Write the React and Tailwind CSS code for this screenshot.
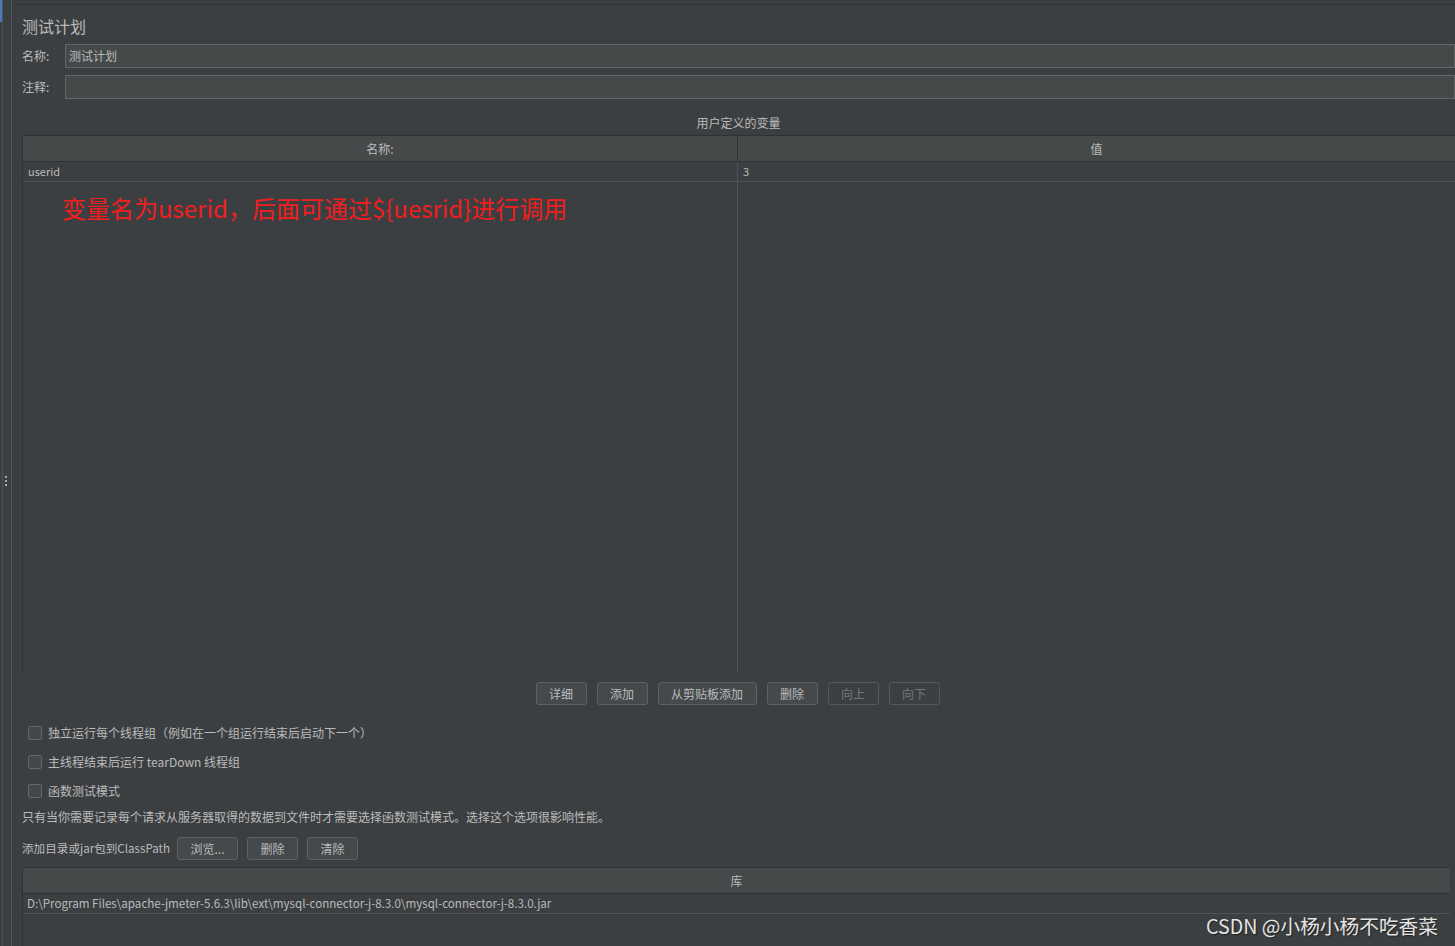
const FONT = "font-['Noto_Sans_CJK_SC','Noto_Sans',sans-serif]";

const Btn = ({ label, width, disabled }) => (
  <button
    className={`h-[23px] rounded-[3px] border text-[12px] leading-none ${
      disabled
        ? "border-[#55595b] bg-[#3c3f41] text-[#75787a]"
        : "border-[#5e6264] bg-[#45494b] text-[#bbbbbb]"
    }`}
    style={{ width }}
  >
    {label}
  </button>
);

const Check = ({ children }) => (
  <div className="flex h-[29px] items-center pl-[6px]">
    <span className="h-[14px] w-[14px] rounded-[2px] border border-[#646869] bg-[#43494a]" />
    <span className="ml-[6px] text-[12px] leading-[16px]">{children}</span>
  </div>
);

export default function App() {
  return (
    <div
      className={`relative flex h-[946px] w-[1455px] overflow-hidden bg-[#3c3f41] text-[#bbbbbb] ${FONT}`}
    >
      {/* left gutter */}
      <div className="relative w-[12px] shrink-0">
        <div className="absolute left-0 top-0 h-[22px] w-[2px] bg-[#4a78c2]" />
        <div className="absolute left-[2px] top-0 h-full w-px bg-[#4f5254]" />
        <div className="absolute right-0 top-0 h-full w-px bg-[#54575a]" />
        <div className="absolute left-[5px] top-[476px] flex flex-col gap-[2px]">
          <span className="h-[2px] w-[2px] bg-[#a9a9a9]" />
          <span className="h-[2px] w-[2px] bg-[#a9a9a9]" />
          <span className="h-[2px] w-[2px] bg-[#a9a9a9]" />
        </div>
      </div>

      <div className="flex min-w-0 flex-1 flex-col">
        <div className="h-[5px] shrink-0 border-b border-[#323436] bg-[#3c3f41]" />
        <div className="flex flex-col pl-[10px]">
          <div className="mt-[10px] text-[16px] leading-[22px]">测试计划</div>

          <div className="mt-[7px] flex items-center">
            <span className="w-[43px] text-[12px]">名称:</span>
            <div className="flex h-[24px] flex-1 items-center border border-[#646464] bg-[#45494a] pl-[3px] text-[12px]">
              测试计划
            </div>
          </div>
          <div className="mt-[7px] flex items-center">
            <span className="w-[43px] text-[12px]">注释:</span>
            <div className="h-[24px] flex-1 border border-[#646464] bg-[#45494a]" />
          </div>

          <div className="mt-[16px] text-center text-[12px] leading-[16px]">用户定义的变量</div>

          {/* variables table */}
          <div className="mt-[4px] flex h-[538px] flex-col border-l border-t border-[#2f3133]">
            <div className="flex h-[26px] shrink-0 border-b border-[#2f3234] bg-[#45494a] text-[12px]">
              <div className="flex w-[715px] items-center justify-center border-r border-[#2f3234]">
                名称:
              </div>
              <div className="flex flex-1 items-center justify-center">值</div>
            </div>
            <div className="flex h-[20px] shrink-0 border-b border-[#4f5355] text-[11px]">
              <div className="flex w-[715px] items-center border-r border-[#4f5355] pl-[5px]">
                userid
              </div>
              <div className="flex flex-1 items-center pl-[5px]">3</div>
            </div>
            <div className="flex flex-1">
              <div className="w-[715px] border-r border-[#4f5355] pl-[39px] pt-[10px]">
                <span className="text-[24px] leading-[32px] text-[#f01e1e]">
                  变量名为userid，后面可通过${"{"}uesrid{"}"}进行调用
                </span>
              </div>
              <div className="flex-1" />
            </div>
          </div>

          <div className="mt-[9px] flex justify-center gap-[10px] pr-[2px]">
            <Btn label="详细" width={51} />
            <Btn label="添加" width={51} />
            <Btn label="从剪贴板添加" width={99} />
            <Btn label="删除" width={51} />
            <Btn label="向上" width={51} disabled />
            <Btn label="向下" width={51} disabled />
          </div>

          <div className="mt-[13px] flex flex-col">
            <Check>独立运行每个线程组（例如在一个组运行结束后启动下一个）</Check>
            <Check>主线程结束后运行 tearDown 线程组</Check>
            <Check>函数测试模式</Check>
          </div>

          <div className="mt-[4px] text-[12px] leading-[16px]">
            只有当你需要记录每个请求从服务器取得的数据到文件时才需要选择函数测试模式。选择这个选项很影响性能。
          </div>

          <div className="mt-[12px] flex items-center gap-[9px]">
            <span className="w-[146px] whitespace-nowrap text-[11.6px]">添加目录或jar包到ClassPath</span>
            <Btn label="浏览..." width={61} />
            <Btn label="删除" width={51} />
            <Btn label="清除" width={51} />
          </div>

          {/* library table */}
          <div className="mr-[5px] mt-[7px] flex h-[80px] flex-col border-l border-t border-[#2f3133]">
            <div className="flex h-[26px] shrink-0 items-center justify-center border-b border-[#2f3234] bg-[#45494a] text-[12px]">
              库
            </div>
            <div className="flex h-[20px] shrink-0 items-center border-b border-[#4f5355] pl-[4px] text-[11.6px]">
              D:\Program Files\apache-jmeter-5.6.3\lib\ext\mysql-connector-j-8.3.0\mysql-connector-j-8.3.0.jar
            </div>
          </div>
        </div>
      </div>

      <div className="absolute right-[17px] top-[912px] text-[19.7px] leading-[28px] text-[#e4e4e4] [text-shadow:1px_1px_1px_#222]">
        CSDN @小杨小杨不吃香菜
      </div>
    </div>
  );
}
